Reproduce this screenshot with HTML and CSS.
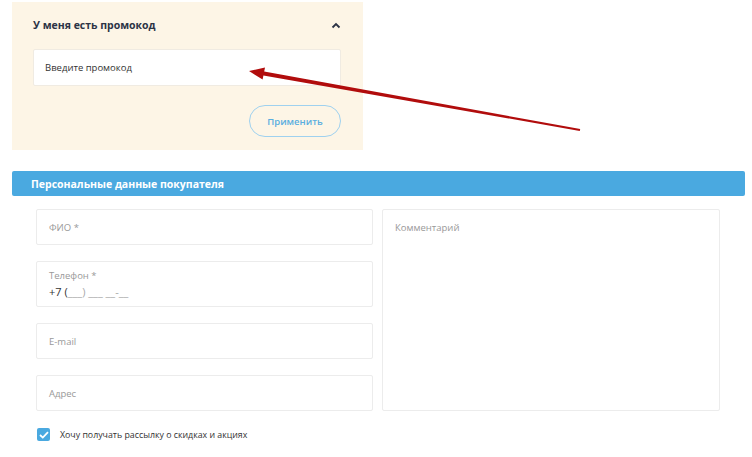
FILE: index.html
```html
<!DOCTYPE html>
<html lang="ru">
<head>
  <meta charset="UTF-8" />
  <title>Оформление заказа</title>
  <link rel="stylesheet" href="styles.css">
</head>
<body>
  <div class="page">

    <div class="promo">
      <div class="promo-header">
        <span>У меня есть промокод</span>
        <svg class="chevron" width="10" height="7" viewBox="0 0 10 7">
          <path d="M1.5 5.5 L5 2 L8.5 5.5" fill="none" stroke="#2c3345" stroke-width="1.8"/>
        </svg>
      </div>
      <div class="promo-input">Введите промокод</div>
      <div class="promo-actions">
        <button class="btn-outline">Применить</button>
      </div>
    </div>

    <div class="section-title">Персональные данные покупателя</div>

    <div class="form">
      <div class="fields">
        <div class="field">ФИО *</div>
        <div class="field field-phone">
          <div class="field-label">Телефон *</div>
          <div class="phone"><span class="dark">+7 (</span>___) ___ __-__</div>
        </div>
        <div class="field">E-mail</div>
        <div class="field">Адрес</div>
      </div>
      <div class="comment">Комментарий</div>
    </div>

    <label class="subscribe">
      <span class="checkbox">
        <svg width="10" height="8" viewBox="0 0 10 8">
          <path d="M1 4 L3.8 6.6 L9 1.2" fill="none" stroke="#fff" stroke-width="1.8"/>
        </svg>
      </span>
      Хочу получать рассылку о скидках и акциях
    </label>

    <!-- annotation arrow -->
    <svg class="arrow" width="752" height="457" viewBox="0 0 752 457">
      <polygon fill="#b10c0c" points="249,71 265,67.4 264.2,71.6 580.2,129.1 579.8,130.9 263.4,75.4 262.6,79.6"/>
    </svg>
  </div>
</body>
</html>
```

FILE: styles.css
```css
* {
  box-sizing: border-box;
}

body {
  margin: 0;
  background: #fff;
  font-family: "Open Sans", Arial, sans-serif;
  color: #333;
}

.page {
  position: relative;
  padding: 2px 7px 0 12px;
}

/* promo code block */
.promo {
  width: 351px;
  background: #fdf5e6;
  padding: 0 22px 13px 21px;
}

.promo-header {
  height: 46px;
  display: flex;
  align-items: center;
  justify-content: space-between;
  font-size: 10.5px;
  font-weight: 700;
  color: #2c3345;
}

.promo-input {
  margin-top: 1px;
  height: 37px;
  background: #fff;
  border: 1px solid #f0ebe2;
  border-radius: 2px;
  padding: 0 11px;
  display: flex;
  align-items: center;
  font-size: 9.5px;
  color: #333;
}

.promo-actions {
  display: flex;
  justify-content: flex-end;
  margin-top: 19px;
}

.btn-outline {
  width: 92px;
  height: 32px;
  border: 1px solid #9fd1ef;
  border-radius: 16px;
  background: transparent;
  font-family: "Open Sans", Arial, sans-serif;
  font-size: 9.5px;
  font-weight: 600;
  color: #5aaee0;
}

/* section header */
.section-title {
  margin-top: 21px;
  height: 25px;
  background: #4aa9e0;
  border-radius: 2px;
  color: #fff;
  font-size: 10.5px;
  font-weight: 700;
  padding-left: 19px;
  display: flex;
  align-items: center;
}

/* personal data form */
.form {
  display: flex;
  gap: 9px;
  margin-top: 13px;
  padding: 0 25px 0 24px;
}

.fields {
  width: 337px;
  display: flex;
  flex-direction: column;
  gap: 16px;
}

.field {
  height: 36px;
  border: 1px solid #ececec;
  border-radius: 2px;
  padding: 0 12px;
  display: flex;
  align-items: center;
  font-size: 9.5px;
  color: #999;
}

.field-phone {
  height: 46px;
  flex-direction: column;
  align-items: flex-start;
  justify-content: center;
  line-height: 16px;
}

.phone {
  color: #aaa;
  font-size: 11px;
}

.phone .dark {
  color: #333;
}

.comment {
  width: 338px;
  height: 202px;
  border: 1px solid #ececec;
  border-radius: 2px;
  padding: 11px 12px;
  font-size: 9.5px;
  color: #999;
}

.subscribe {
  display: flex;
  align-items: center;
  gap: 10px;
  margin: 17px 0 0 25px;
  font-size: 8.8px;
  color: #333;
}

.checkbox {
  width: 13px;
  height: 13px;
  border-radius: 2px;
  background: #4aa9e0;
  display: flex;
  align-items: center;
  justify-content: center;
}

.arrow {
  position: absolute;
  left: 0;
  top: 0;
  pointer-events: none;
}
```
